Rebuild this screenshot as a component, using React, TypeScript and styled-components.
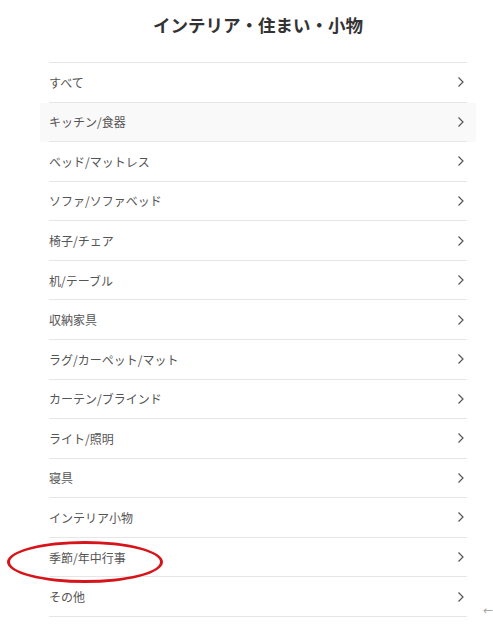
import { FC } from "react";
import styled, { createGlobalStyle } from "styled-components";

const categories = [
  "すべて",
  "キッチン/食器",
  "ベッド/マットレス",
  "ソファ/ソファベッド",
  "椅子/チェア",
  "机/テーブル",
  "収納家具",
  "ラグ/カーペット/マット",
  "カーテン/ブラインド",
  "ライト/照明",
  "寝具",
  "インテリア小物",
  "季節/年中行事",
  "その他",
];

const GlobalStyle = createGlobalStyle`
  body {
    margin: 0;
    background: #fff;
    font-family: "Noto Sans CJK JP", "Noto Sans", sans-serif;
  }
`;

const Chevron: FC = () => (
  <svg width="8" height="12" viewBox="0 0 8 12">
    <path d="M1.5 1.5 L6 6 L1.5 10.5" fill="none" stroke="#555" strokeWidth="1.2" />
  </svg>
);

const App: FC = () => (
  <>
    <GlobalStyle />
    <Page>
      <Title>インテリア・住まい・小物</Title>
      <List>
        {categories.map((name, i) => (
          <Item key={name} hovered={i === 1}>
            <Row>
              <Label>{name}</Label>
              <Chevron />
            </Row>
          </Item>
        ))}
        <Mark />
      </List>
      <BackArrow>←</BackArrow>
    </Page>
  </>
);

const Page = styled.div`
  position: relative;
  width: 493px;
  height: 627px;
  padding-left: 49px;
  box-sizing: border-box;
`;

const Title = styled.h1`
  width: 418px;
  margin: 0;
  padding-top: 12px;
  height: 50px;
  box-sizing: border-box;
  text-align: center;
  font-size: 17.5px;
  line-height: 26px;
  font-weight: 700;
  color: #333;
`;

const List = styled.ul`
  position: relative;
  width: 418px;
  margin: 12px 0 0;
  padding: 0;
  list-style: none;
  border-top: 1px solid #e6e6e6;
`;

const Item = styled.li<{ hovered?: boolean }>`
  margin: 0 -9px;
  padding: 0 9px;
  background: ${({ hovered }) => (hovered ? "#f9f9f9" : "transparent")};
`;

const Row = styled.div`
  height: 39.57px;
  box-sizing: border-box;
  display: flex;
  align-items: center;
  justify-content: space-between;
  padding-right: 2px;
  border-bottom: 1px solid #e6e6e6;
`;

const Label = styled.span`
  font-size: 12px;
  color: #555;
`;

const Mark = styled.div`
  position: absolute;
  left: -42px;
  top: 478px;
  width: 150px;
  height: 36px;
  border: 3px solid #d7141a;
  border-radius: 50%;
`;

const BackArrow = styled.span`
  position: absolute;
  left: 483px;
  top: 603px;
  font-size: 10px;
  color: #999;
`;

export default App;
